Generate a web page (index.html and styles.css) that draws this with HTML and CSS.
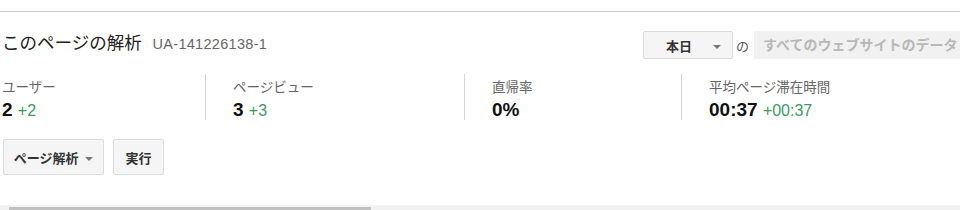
FILE: index.html
```html
<!DOCTYPE html>
<html lang="ja">

<head>
    <meta charset="UTF-8">
    <title>このページの解析</title>
    <link rel="stylesheet" href="styles.css">
</head>

<body>
    <div id="panel">
        <div class="head">
            <h1>このページの解析 <span class="ua">UA-141226138-1</span></h1>
            <div class="range">
                <button class="drop date">本日 <span class="caret"></span></button>
                <span class="no">の</span>
                <div class="site">すべてのウェブサイトのデータ</div>
            </div>
        </div>

        <div class="metrics">
            <div class="metric m1">
                <div class="label">ユーザー</div>
                <div class="value">2 <span class="diff">+2</span></div>
            </div>
            <div class="metric m2">
                <div class="label">ページビュー</div>
                <div class="value">3 <span class="diff">+3</span></div>
            </div>
            <div class="metric m3">
                <div class="label">直帰率</div>
                <div class="value">0%</div>
            </div>
            <div class="metric m4">
                <div class="label">平均ページ滞在時間</div>
                <div class="value">00:37 <span class="diff">+00:37</span></div>
            </div>
        </div>

        <div class="tools">
            <button class="drop kind">ページ解析 <span class="caret"></span></button>
            <button class="run">実行</button>
        </div>
    </div>

    <div class="scroll"><div class="thumb"></div></div>
</body>

</html>
```

FILE: styles.css
```css
body {
    margin: 0;
    font-family: "Liberation Sans", Arial, "Noto Sans CJK JP", sans-serif;
    background-color: white;
    color: #222;
}

#panel {
    margin-top: 11px;
    border-top: 1px solid #cccccc;
    height: 193px;
}

.head {
    display: flex;
    justify-content: space-between;
    align-items: flex-start;
    padding: 19px 0 0 2px;
}

h1 {
    margin: 0;
    line-height: 24px;
    font-size: 17.5px;
    font-weight: normal;
    color: #222;
}

.ua {
    font-size: 14.5px;
    color: #666;
    margin-left: 6px;
    letter-spacing: 0.3px;
}

.range {
    display: flex;
    align-items: center;
}

button {
    font-family: inherit;
    background-color: #f5f5f5;
    border: 1px solid #dcdcdc;
    border-radius: 2px;
    color: #333;
    font-weight: bold;
    font-size: 13px;
    padding: 0;
    white-space: nowrap;
    cursor: pointer;
}

.caret {
    display: inline-block;
    width: 0;
    height: 0;
    border-left: 4px solid transparent;
    border-right: 4px solid transparent;
    border-top: 4px solid #777;
    vertical-align: middle;
}

.date {
    width: 90px;
    height: 28px;
    margin-right: 3px;
    text-align: left;
    padding-left: 22px;
}

.date .caret {
    margin-left: 17px;
}

.no {
    font-size: 13px;
    color: #555;
    margin-right: 5px;
}

.site {
    width: 206px;
    height: 28px;
    line-height: 28px;
    box-sizing: border-box;
    padding-left: 9px;
    background-color: #f1f1f1;
    color: #b8b8b8;
    font-size: 14px;
    font-weight: bold;
    white-space: nowrap;
}

.metrics {
    display: grid;
    grid-template-columns: 205px 259px 217px 1fr;
    margin-top: 15px;
}

.metric {
    height: 46px;
    padding-left: 27px;
    border-left: 1px solid #d6d6d6;
}

.metric.m1 {
    border-left: none;
    padding-left: 2px;
}

.label {
    font-size: 13.5px;
    color: #666;
    margin-top: 2px;
}

.value {
    font-size: 19px;
    font-weight: bold;
    color: #111;
    margin-top: 3px;
}

.diff {
    font-size: 16px;
    font-weight: normal;
    color: #3d9a5f;
}

.tools {
    display: flex;
    gap: 9px;
    padding: 19px 0 0 3px;
}

.tools button {
    height: 36px;
}

.kind {
    width: 101px;
}

.kind .caret {
    margin-left: 3px;
}

.run {
    width: 51px;
}

.scroll {
    height: 4px;
    background-color: #f1f1f1;
    border-top: 1px solid #f6f6f6;
    padding-left: 9px;
    padding-top: 1px;
}

.thumb {
    width: 362px;
    height: 3px;
    background-color: #c1c1c1;
}
```
